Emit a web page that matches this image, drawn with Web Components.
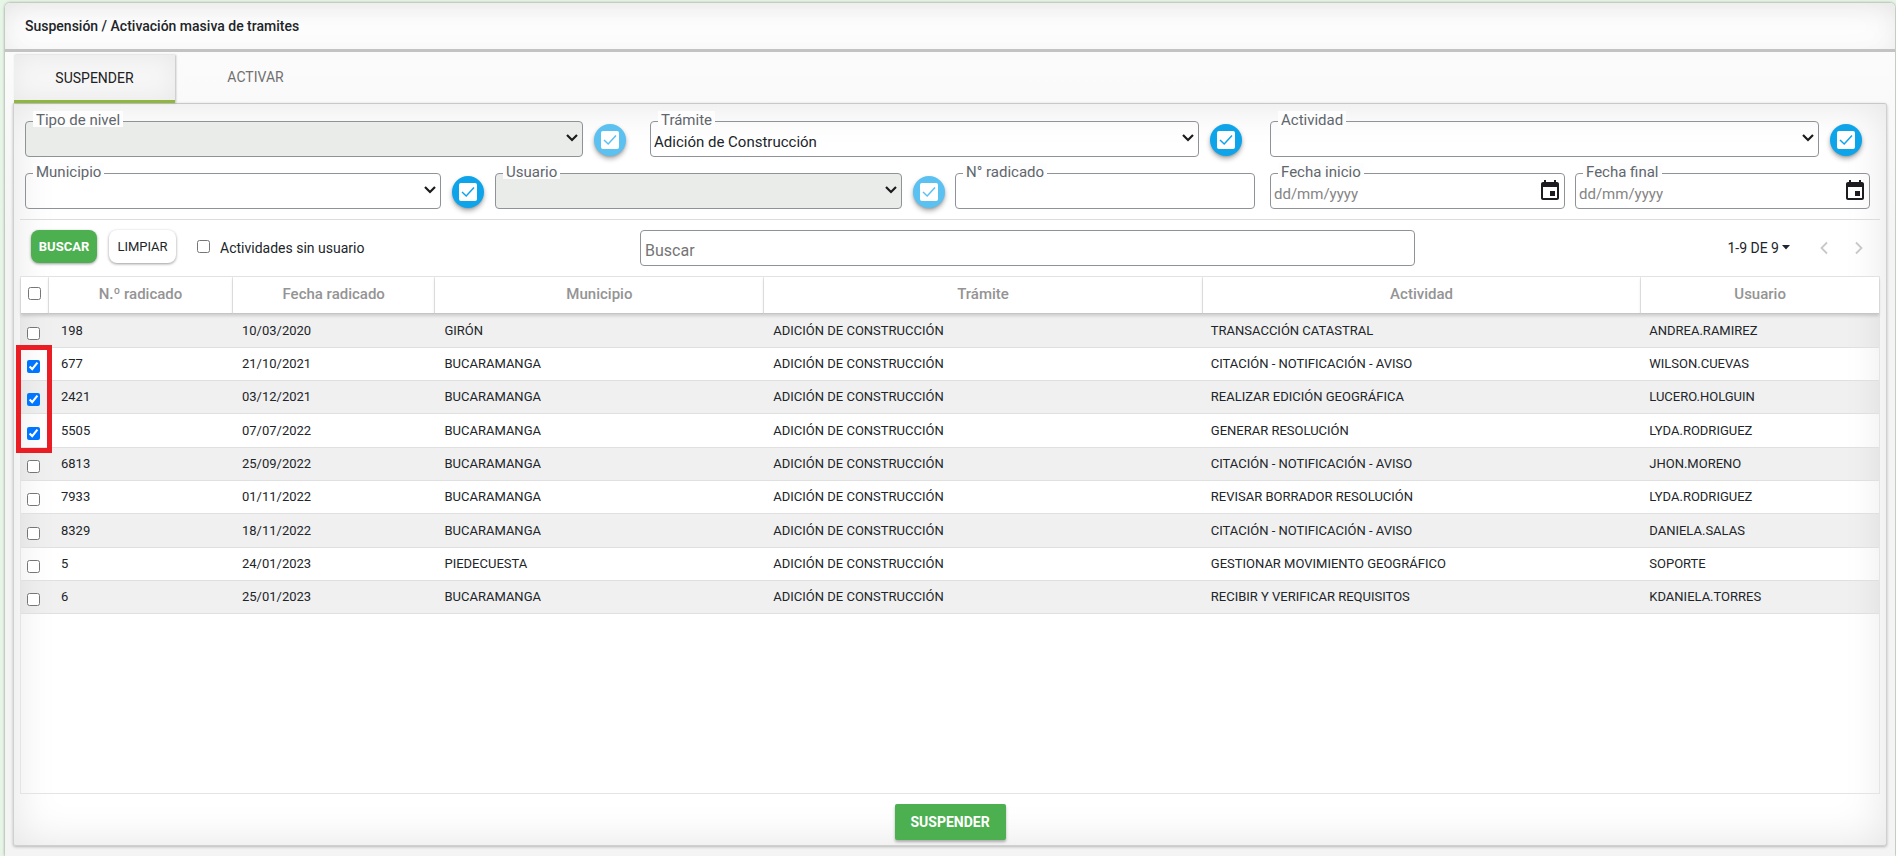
<!DOCTYPE html>
<html lang="es">
<head>
<meta charset="utf-8">
<title>Suspensión / Activación masiva de tramites</title>
<style>
html,body{margin:0;padding:0}
body{background:#e6f5e6;font-family:Roboto,"Liberation Sans",sans-serif;font-size:14px;color:#212529}
</style>
</head>
<body>
<bulk-page></bulk-page>
<script>
class Base extends HTMLElement{
  constructor(){super();this.attachShadow({mode:'open'});}
  connectedCallback(){this.shadowRoot.innerHTML='<style>*{box-sizing:border-box}button,input,select{font:inherit;color:inherit;margin:0}'+this.css()+'</style>'+this.html();}
  css(){return '';}
  html(){return '<slot></slot>';}
}

customElements.define('tab-bar',class extends Base{
  css(){return `
  :host{display:flex;height:48px;margin:3px 9px 0}
  button{border:0;background:none;padding:0 0 4px;width:161px;color:#707070;font-size:14px}
  button.on{padding:0;color:#212121;background:#f6f6f6;box-shadow:inset 0 0 24px rgba(0,0,0,.06),1px 0 2px rgba(0,0,0,.25);border-bottom:3px solid #8fb63f}`;}
  html(){return '<button class="on" role="tab" aria-selected="true">SUSPENDER</button><button role="tab" aria-selected="false">ACTIVAR</button>';}
});

customElements.define('form-field',class extends Base{
  css(){return `
  :host{display:block;position:relative;min-width:0}
  label{position:absolute;left:8px;top:-10px;height:16px;line-height:18px;padding:0 3px;background:#fdfdfd;color:#5f666d;font-size:15px;white-space:nowrap}
  select,input{display:block;width:100%;height:36px;border:1px solid #8f9398;border-radius:4px;background:transparent;padding:6px 3px 0;appearance:none;font-size:15px;outline:0}
  select:disabled{background:#eaecea;opacity:1}
  input::placeholder{color:#858585;opacity:1}
  .chev{position:absolute;right:4px;top:12px;pointer-events:none}
  .cal{position:absolute;right:3px;top:6px;width:24px;height:24px;padding:0;border:0;background:none}
  svg{display:block}`;}
  html(){
    const l=this.getAttribute('label'),k=this.getAttribute('kind'),v=this.getAttribute('value')||'';
    if(k==='select')return `<select id="c"${this.hasAttribute('disabled')?' disabled':''}><option>${v}</option></select><label for="c">${l}</label><svg class="chev" width="14" height="10" viewBox="0 0 14 10"><path d="M2 2l5 5 5-5" fill="none" stroke="#1b1b1b" stroke-width="2.2"/></svg>`;
    if(k==='date')return `<input id="c" type="text" placeholder="dd/mm/yyyy"><label for="c">${l}</label><button class="cal" aria-label="Abrir calendario"><svg width="24" height="24" viewBox="0 0 24 24"><path fill="#1d1b20" d="M17 12h-5v5h5v-5zM16 1v2H8V1H6v2H5c-1.110 0-1.990.9-1.990 2L3 19c0 1.100.89 2 2 2h14c1.100 0 2-.9 2-2V5c0-1.100-.9-2-2-2h-1V1h-2zm3 18H5V8h14v11z"/></svg></button>`;
    return `<input id="c" type="text"><label for="c">${l}</label>`;
  }
});

customElements.define('check-button',class extends Base{
  css(){return `
  :host{display:block;flex:none;width:32px;height:32px}
  button{display:grid;place-items:center;width:32px;height:32px;border:0;border-radius:50%;padding:0;background:#0ea4ea;box-shadow:0 3px 5px rgba(0,0,0,.3),0 1px 2px rgba(0,0,0,.15)}
  button:disabled{background:#5bc1f1}`;}
  html(){const c=this.hasAttribute('disabled')?'#5bc1f1':'#0ea4ea';
    return `<button aria-label="Seleccionar varios"${this.hasAttribute('disabled')?' disabled':''}><svg width="20" height="20" viewBox="0 0 20 20"><rect x="1" y="1" width="18" height="18" rx="2" fill="#fff"/><path d="M4 10l4.200 4L16 5.500" fill="none" stroke="${c}" stroke-width="1.500"/></svg></button>`;}
});

customElements.define('filter-form',class extends Base{
  css(){return `
  :host{display:block;padding:17px 16px 0 11px}
  .row{display:flex;height:36px;margin-bottom:16px}
  .row.one{padding-right:8px}
  form-field{flex:1 1 0}
  check-button{margin:3px 11px 0 11px}
  .w558{flex-grow:558}.w549{flex-grow:549}.w416{flex-grow:416}.w407{flex-grow:407}.w300{flex-grow:300}.w295{flex-grow:295}
  .g24{margin-right:24px}.g28{margin-right:28px}.g15{margin-right:15px}.g10{margin-right:10px}.g0{margin-right:0}
  .two{margin-bottom:10px}`;}
  html(){return `
  <div class="row one">
    <form-field class="w558" kind="select" label="Tipo de nivel" disabled></form-field><check-button class="g24" disabled></check-button>
    <form-field class="w549" kind="select" label="Trámite" value="Adición de Construcción"></form-field><check-button class="g28"></check-button>
    <form-field class="w549" kind="select" label="Actividad"></form-field><check-button class="g0"></check-button>
  </div>
  <div class="row two">
    <form-field class="w416" kind="select" label="Municipio"></form-field><check-button></check-button>
    <form-field class="w407" kind="select" label="Usuario" disabled></form-field><check-button class="g10" disabled></check-button>
    <form-field class="w300 g15" kind="text" label="N° radicado"></form-field>
    <form-field class="w295 g10" kind="date" label="Fecha inicio"></form-field>
    <form-field class="w295" kind="date" label="Fecha final"></form-field>
  </div>`;}
});

customElements.define('tool-bar',class extends Base{
  css(){return `
  :host{display:grid;grid-template-columns:609px minmax(0,775fr) minmax(0,465fr);margin:0 6px;padding:10px 0 10px 11px;border-top:1px solid #dcdcdc;height:57px}
  .l{display:flex;height:33px}
  .l button{border:0;border-radius:8px;width:67px;height:33px;padding:0 0 1px;background:#fff;font-size:13px;box-shadow:0 1px 3px rgba(0,0,0,.4);margin-right:12px}
  .l button.go{width:66px;background:#4caf50;color:#fff;font-weight:700}
  .l input{width:13px;height:13px;margin:10px 10px 0 9px}
  .l label{line-height:36px;font-size:14px}
  .q{height:36px;width:100%;border:1px solid #8f9398;border-radius:4px;background:#fff;padding:4px 4px 0;font-size:16px;outline:0}
  .q::placeholder{color:#757575}
  .p{display:flex;align-items:center;justify-content:flex-end;height:36px;padding-right:9px}
  .p button{border:0;background:none;padding:0;height:24px;display:flex;align-items:center}
  .p .n{font-size:14px;margin-right:20px}
  .p .c{width:24px;justify-content:center}
  .p .c+.c{margin-left:11px}`;}
  html(){return `
  <div class="l"><button class="go">BUSCAR</button><button>LIMPIAR</button><input type="checkbox" id="s"><label for="s">Actividades sin usuario</label></div>
  <input class="q" type="text" placeholder="Buscar" aria-label="Buscar">
  <div class="p"><button class="n">1-9 DE 9<svg width="13" height="8" viewBox="0 0 13 8"><path d="M3 1h8L7 5.500z" fill="#212529"/></svg></button>
  <button class="c" aria-label="Anterior" disabled><svg width="10" height="14" viewBox="0 0 10 14"><path d="M8 1.500L2.500 7 8 12.500" fill="none" stroke="#c8c8c8" stroke-width="1.800"/></svg></button>
  <button class="c" aria-label="Siguiente" disabled><svg width="10" height="14" viewBox="0 0 10 14"><path d="M2 1.500L7.500 7 2 12.500" fill="none" stroke="#c8c8c8" stroke-width="1.800"/></svg></button></div>`;}
});

const ROWS=[
 ['198','10/03/2020','GIRÓN','TRANSACCIÓN CATASTRAL','ANDREA.RAMIREZ',0],
 ['677','21/10/2021','BUCARAMANGA','CITACIÓN - NOTIFICACIÓN - AVISO','WILSON.CUEVAS',1],
 ['2421','03/12/2021','BUCARAMANGA','REALIZAR EDICIÓN GEOGRÁFICA','LUCERO.HOLGUIN',1],
 ['5505','07/07/2022','BUCARAMANGA','GENERAR RESOLUCIÓN','LYDA.RODRIGUEZ',1],
 ['6813','25/09/2022','BUCARAMANGA','CITACIÓN - NOTIFICACIÓN - AVISO','JHON.MORENO',0],
 ['7933','01/11/2022','BUCARAMANGA','REVISAR BORRADOR RESOLUCIÓN','LYDA.RODRIGUEZ',0],
 ['8329','18/11/2022','BUCARAMANGA','CITACIÓN - NOTIFICACIÓN - AVISO','DANIELA.SALAS',0],
 ['5','24/01/2023','PIEDECUESTA','GESTIONAR MOVIMIENTO GEOGRÁFICO','SOPORTE',0],
 ['6','25/01/2023','BUCARAMANGA','RECIBIR Y VERIFICAR REQUISITOS','KDANIELA.TORRES',0]];

customElements.define('record-table',class extends Base{
  css(){return `
  :host{display:block;position:relative;margin:0 6px;min-height:518px;border:1px solid #e4e4e4}
  table{width:100%;table-layout:fixed;border-collapse:separate;border-spacing:0}
  th{height:37px;padding:0 0 2px;font-size:15px;font-weight:500;color:#949494;background:#fff;border-right:1px solid #e8e8e8;border-bottom:1px solid #c6c6c6;box-shadow:0 2px 3px rgba(0,0,0,.15)}
  th:last-child{border-right:0}
  td{height:33px;padding:0 8px 1px;font-size:13px;border-bottom:1px solid #e0e0e0;white-space:nowrap}
  td:nth-child(2){padding-left:12px}
  td:nth-child(n+3){padding-left:9px}
  td:nth-child(n+6){padding-left:8px}
  tr:nth-child(3n+1) td{height:34px}
  tbody tr:nth-child(odd){background:rgba(0,0,0,.06)}
  input{display:block;width:13px;height:13px}
  td input{margin:6px 0 0 -2px}
  th input{margin:0 0 2px 7px}
  .mark{position:absolute;left:-5px;top:68px;width:36px;height:108px;border:5px solid #ea1c24;pointer-events:none}`;}
  html(){return `<table><colgroup><col style="width:28px"><col style="width:9.9%"><col style="width:10.9%"><col style="width:17.7%"><col style="width:23.6%"><col style="width:23.6%"><col></colgroup>
  <thead><tr><th><input type="checkbox" aria-label="Seleccionar todo"></th><th>N.º radicado</th><th>Fecha radicado</th><th>Municipio</th><th>Trámite</th><th>Actividad</th><th>Usuario</th></tr></thead>
  <tbody>${ROWS.map(r=>`<tr><td><input type="checkbox" aria-label="Seleccionar ${r[0]}"${r[5]?' checked':''}></td><td>${r[0]}</td><td>${r[1]}</td><td>${r[2]}</td><td>ADICIÓN DE CONSTRUCCIÓN</td><td>${r[3]}</td><td>${r[4]}</td></tr>`).join('')}</tbody></table><div class="mark"></div>`;}
});

customElements.define('bulk-page',class extends Base{
  css(){return `
  :host{display:block;padding:3px 1px 0 5px}
  .card{min-height:calc(100vh - 3px);border-radius:5px 5px 0 0;box-shadow:0 0 3px rgba(0,0,0,.45);padding-bottom:10px;background:linear-gradient(#fbfbfb 60px,#f4f4f4 240px)}
  h1{margin:0;height:49px;padding:0 20px;font-size:14px;font-weight:500;line-height:46px;border-bottom:3px solid #c3c3c3;border-radius:5px 5px 0 0;background:#fff;box-shadow:inset 0 10px 30px -8px rgba(0,0,0,.09),inset 0 0 40px rgba(0,0,0,.04)}
  .panel{margin:0 8px;background:#fff;border:1px solid #d0d0d0;border-top-color:#c8c8c8;border-radius:0 3px 3px 3px;box-shadow:inset 0 0 44px rgba(0,0,0,.11),0 1px 3px rgba(0,0,0,.25);padding-bottom:5px}
  .foot{display:flex;justify-content:center;padding-top:10px}
  .foot button{width:111px;height:36px;border:0;border-radius:2px;background:#4caf50;color:#fff;font-size:14px;font-weight:700;padding:0;box-shadow:0 2px 3px rgba(0,0,0,.3)}`;}
  html(){return `<div class="card"><h1>Suspensión / Activación masiva de tramites</h1><tab-bar></tab-bar>
  <div class="panel"><filter-form></filter-form><tool-bar></tool-bar><record-table></record-table><div class="foot"><button>SUSPENDER</button></div></div></div>`;}
});
</script>
</body>
</html>
